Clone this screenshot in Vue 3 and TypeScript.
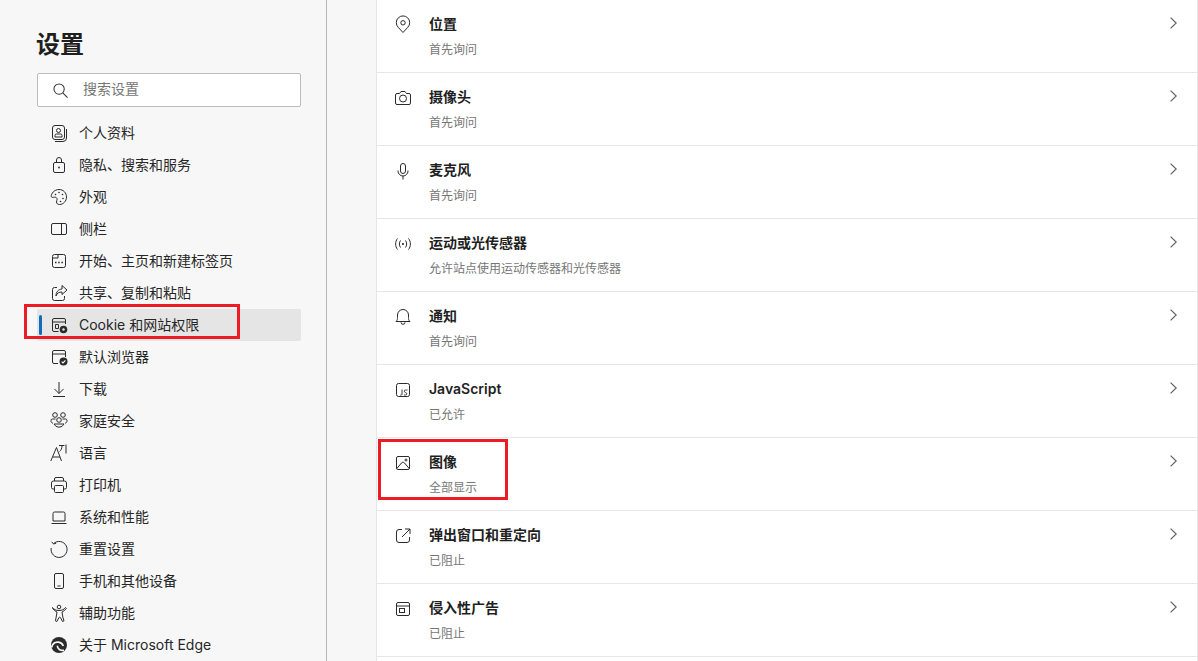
<script setup lang="ts">
interface NavItem {
  icon: string
  label: string
  active?: boolean
}

interface PermRow {
  icon: string
  title: string
  sub: string
  marked?: boolean
}

const navItems: NavItem[] = [
  { icon: 'profile', label: '个人资料' },
  { icon: 'lock', label: '隐私、搜索和服务' },
  { icon: 'palette', label: '外观' },
  { icon: 'sidebar', label: '侧栏' },
  { icon: 'start', label: '开始、主页和新建标签页' },
  { icon: 'share', label: '共享、复制和粘贴' },
  { icon: 'cookie', label: 'Cookie 和网站权限', active: true },
  { icon: 'browser', label: '默认浏览器' },
  { icon: 'download', label: '下载' },
  { icon: 'family', label: '家庭安全' },
  { icon: 'language', label: '语言' },
  { icon: 'printer', label: '打印机' },
  { icon: 'laptop', label: '系统和性能' },
  { icon: 'reset', label: '重置设置' },
  { icon: 'phone', label: '手机和其他设备' },
  { icon: 'access', label: '辅助功能' },
  { icon: 'edge', label: '关于 Microsoft Edge' },
]

const rows: PermRow[] = [
  { icon: 'pin', title: '位置', sub: '首先询问' },
  { icon: 'camera', title: '摄像头', sub: '首先询问' },
  { icon: 'mic', title: '麦克风', sub: '首先询问' },
  { icon: 'motion', title: '运动或光传感器', sub: '允许站点使用运动传感器和光传感器' },
  { icon: 'bell', title: '通知', sub: '首先询问' },
  { icon: 'js', title: 'JavaScript', sub: '已允许' },
  { icon: 'image', title: '图像', sub: '全部显示', marked: true },
  { icon: 'popup', title: '弹出窗口和重定向', sub: '已阻止' },
  { icon: 'ads', title: '侵入性广告', sub: '已阻止' },
]
</script>

<template>
  <div class="page">
    <aside class="side">
      <h1 class="heading">设置</h1>
      <div class="search">
        <svg class="search-icon" viewBox="0 0 16 16">
          <circle cx="6.5" cy="6.5" r="5.5" />
          <path d="M10.5 10.5 15.500 15.500" />
        </svg>
        <span class="search-text">搜索设置</span>
      </div>
      <nav class="nav">
        <div v-for="item in navItems" :key="item.label" class="nav-item" :class="{ active: item.active }">
          <span v-if="item.active" class="marker"></span>
          <span v-if="item.active" class="red-nav"></span>
          <svg class="icon" viewBox="0 0 20 20">
            <template v-if="item.icon === 'profile'">
              <rect x="3.500" y="2.500" width="12" height="14" rx="2.500" />
              <circle cx="9.500" cy="7.500" r="2" />
              <path d="M6 14v-1.500a1.500 1.500 0 0 1 1.500-1.500h4a1.500 1.500 0 0 1 1.500 1.500V14z" />
              <path d="M6 18.500h8a3.500 3.500 0 0 0 3.500-3.500V6" />
            </template>
            <template v-else-if="item.icon === 'lock'">
              <rect x="4.500" y="7.500" width="11" height="10" rx="1.500" />
              <path d="M7.500 7.500V5a2.500 2.500 0 0 1 5 0v2.500" />
              <circle cx="10" cy="12.500" r=".9" class="fill" />
            </template>
            <template v-else-if="item.icon === 'palette'">
              <path d="M10 2.500c4.400 0 7.500 3.400 7.500 7.500s-3.100 7.500-7 7.500c-2 0-3-1-3-2.500 0-1.300.6-1.800.6-2.800 0-1.500-1.300-2.200-2.800-2-1.300.2-2.800.4-3-.5C1.900 6.500 5.400 2.500 10 2.500z" />
              <circle cx="6.500" cy="7.500" r=".8" class="fill" />
              <circle cx="10" cy="5.500" r=".8" class="fill" />
              <circle cx="13.500" cy="7.500" r=".8" class="fill" />
              <circle cx="14" cy="11.500" r=".8" class="fill" />
              <circle cx="11.500" cy="14.500" r=".8" class="fill" />
            </template>
            <template v-else-if="item.icon === 'sidebar'">
              <rect x="2.500" y="4.500" width="15" height="11" rx="1.500" />
              <path d="M12.500 4.500v11" />
            </template>
            <template v-else-if="item.icon === 'start'">
              <rect x="3.500" y="3.500" width="13" height="13" rx="2" />
              <path d="M3.500 7h5.500V3.500" />
              <path d="M6 11.500h1.500M9.200 11.500h1.500M12.400 11.500h1.500" class="bold" />
            </template>
            <template v-else-if="item.icon === 'share'">
              <path d="M8 4.500H5.500a2 2 0 0 0-2 2v9a2 2 0 0 0 2 2h8a2 2 0 0 0 2-2V13" />
              <path d="M13 2.500 18 7l-5 4.500V9c-3 0-5 1-6 4 0-4 2-6.500 6-7z" />
            </template>
            <template v-else-if="item.icon === 'cookie'">
              <path d="M9.500 16.500H5a1.500 1.500 0 0 1-1.500-1.500V5A1.500 1.500 0 0 1 5 3.500h10A1.500 1.500 0 0 1 16.500 5v4" />
              <path d="M3.500 7h13M6.500 9.500h3v4h-3z" />
              <circle cx="14.500" cy="14.500" r="3.800" class="fill" />
              <circle cx="14.500" cy="14.500" r="1.200" class="hole" />
            </template>
            <template v-else-if="item.icon === 'browser'">
              <path d="M9 16.500H5a1.500 1.500 0 0 1-1.500-1.500V5A1.500 1.500 0 0 1 5 3.500h10A1.500 1.500 0 0 1 16.500 5v5" />
              <path d="M3.500 7h13" />
              <circle cx="14.500" cy="14.500" r="4" class="fill" />
              <path d="m12.700 14.600 1.300 1.300 2.400-2.600" class="check" />
            </template>
            <template v-else-if="item.icon === 'download'">
              <path d="M10 3v11.500M5.500 10l4.500 4.500 4.500-4.500M4 17.500h12" />
            </template>
            <template v-else-if="item.icon === 'family'">
              <circle cx="6" cy="4" r="2.300" />
              <circle cx="14" cy="4" r="2.300" />
              <circle cx="10" cy="9" r="2.300" />
              <path d="M6.500 8H3.500a1.500 1.500 0 0 0-1.500 1.500V10c0 1 .6 1.800 2 2.300M13.500 8h3a1.500 1.500 0 0 1 1.500 1.500v.5c0 1-.6 1.800-2 2.300" />
              <path d="M5 13h10a5.500 5.500 0 0 1-10 0z" />
            </template>
            <template v-else-if="item.icon === 'language'">
              <path d="M1.800 18 7.500 4.500 12.500 18M4 14h7" />
              <path d="M10 2.500h5.500M17 1.500v9M13 2.500c0 3-1 5-2.500 6" />
            </template>
            <template v-else-if="item.icon === 'printer'">
              <path d="M5.500 6V4a1.500 1.500 0 0 1 1.500-1.500h6A1.500 1.500 0 0 1 14.500 4v2" />
              <path d="M5.500 14H4a1.500 1.500 0 0 1-1.500-1.500V8a2 2 0 0 1 2-2h11a2 2 0 0 1 2 2v4.500A1.500 1.500 0 0 1 16 14h-1.500" />
              <rect x="5.500" y="10.500" width="9" height="7" rx="1" />
            </template>
            <template v-else-if="item.icon === 'laptop'">
              <path d="M4 14V6.500A1.500 1.500 0 0 1 5.500 5h9A1.500 1.500 0 0 1 16 6.500V14M2.500 16.500h15M4 14h12" />
            </template>
            <template v-else-if="item.icon === 'reset'">
              <path d="M4.500 4.700A8 8 0 1 1 2.200 9" />
              <path d="M2.700 2.800 4.600 5l2.600-.8" />
            </template>
            <template v-else-if="item.icon === 'phone'">
              <rect x="5.500" y="2.500" width="9" height="15" rx="1.500" />
              <path d="M8.500 15h3" />
            </template>
            <template v-else-if="item.icon === 'access'">
              <circle cx="10" cy="4" r="1.800" />
              <path d="M3.500 4.500c1.500 2 3.500 3 6.500 3s5-1 6.500-3l.8 1c-1 1.500-2.500 2.800-4.300 3.500l.8 5 1.200 3.800-1.500.7-2-3.800c-.4-.8-1.200-.8-1.600 0l-2 3.800-1.500-.7L7.200 14l.8-5C6.200 8.300 4.700 7 3.700 5.500z" />
            </template>
            <template v-else-if="item.icon === 'edge'">
              <circle cx="10" cy="10" r="8" class="fill" />
              <path d="M2.500 12.500C3.500 8.500 6.500 6.800 9.500 7.200c2.300.3 3.900 1.600 4.800 3.800" class="cutline" />
              <path d="M8.300 10.800c.2 3 3 5.200 6.700 4.500" class="cutline" />
            </template>
          </svg>
          <span class="nav-label">{{ item.label }}</span>
        </div>
      </nav>
    </aside>

    <main class="content">
      <section class="card">
        <div v-for="row in rows" :key="row.title" class="row">
          <span v-if="row.marked" class="red-row"></span>
          <svg class="icon row-icon" viewBox="0 0 20 20">
            <template v-if="row.icon === 'pin'">
              <path d="M10 17.500 5.200 12.300a6.700 6.700 0 1 1 9.600 0z" />
              <circle cx="10" cy="7.800" r="2.200" />
            </template>
            <template v-else-if="row.icon === 'camera'">
              <path d="M4 5.500h2.500L8 3.500h4l1.500 2H16A1.500 1.500 0 0 1 17.500 7v8a1.500 1.500 0 0 1-1.500 1.500H4A1.500 1.500 0 0 1 2.500 15V7A1.500 1.500 0 0 1 4 5.500z" />
              <circle cx="10" cy="10.500" r="3.500" />
            </template>
            <template v-else-if="row.icon === 'mic'">
              <rect x="7.500" y="2.500" width="5" height="10" rx="2.500" />
              <path d="M5 9.500v.5a5 5 0 0 0 10 0v-.5M10 15v3.500" />
            </template>
            <template v-else-if="row.icon === 'motion'">
              <circle cx="10" cy="10" r="1.100" class="fill" />
              <path d="M7.500 6.500c-1.500 2-1.500 5 0 7M12.500 6.500c1.500 2 1.500 5 0 7M4.500 4.500c-2.500 3-2.500 8 0 11M15.500 4.500c2.500 3 2.500 8 0 11" />
            </template>
            <template v-else-if="row.icon === 'bell'">
              <path d="M3 14.500c1.300-1 1.500-2.500 1.500-4V8a5.500 5.500 0 0 1 11 0v2.500c0 1.500.2 3 1.500 4z" />
              <path d="M8 14.500a2 2 0 0 0 4 0" transform="translate(0 .8)" />
            </template>
            <template v-else-if="row.icon === 'js'">
              <rect x="3.500" y="3.500" width="13" height="13" rx="2" />
              <path d="M9 9.500v4.500c0 1-.6 1.300-1.800 1M14.500 10h-2c-.8 0-1.200.5-1.200 1.200s.4 1.100 1.200 1.300c.9.200 1.300.6 1.300 1.300s-.5 1.200-1.300 1.200h-1.500" class="thin" />
            </template>
            <template v-else-if="row.icon === 'image'">
              <rect x="3.500" y="3.500" width="13" height="13" rx="1.500" />
              <path d="m3.800 15.500 4.700-5.500c.9-1 2-1 3 0l4.700 5.500" />
              <circle cx="13" cy="7" r="1" />
            </template>
            <template v-else-if="row.icon === 'popup'">
              <path d="M9 3.500H6A2.500 2.500 0 0 0 3.500 6v8A2.500 2.500 0 0 0 6 16.500h8a2.500 2.500 0 0 0 2.500-2.500v-3" />
              <path d="M9 11 17 3M12 3h5v5" />
            </template>
            <template v-else-if="row.icon === 'ads'">
              <rect x="3.500" y="3.500" width="13" height="13" rx="1.500" />
              <path d="M3.500 7h13" />
              <rect x="6.500" y="9.500" width="5" height="4" />
            </template>
          </svg>
          <div class="row-text">
            <div class="row-title">{{ row.title }}</div>
            <div class="row-sub">{{ row.sub }}</div>
          </div>
          <svg class="chevron" viewBox="0 0 7 12">
            <path d="M.6.6 6.200 6 .6 11.400" />
          </svg>
        </div>
      </section>
    </main>
  </div>
</template>

<style>
html,
body {
  margin: 0;
  background: #f7f7f7;
}
</style>

<style scoped>
.page {
  display: flex;
  width: 1198px;
  height: 661px;
  overflow: hidden;
  background: #f7f7f7;
  color: #1f1f1f;
  font-family: Inter, "Noto Sans CJK SC", sans-serif;
}

.side {
  box-sizing: border-box;
  flex: none;
  width: 327px;
  padding: 27px 25px 0 37px;
  border-right: 1px solid #b5b5b5;
}

.heading {
  margin: 0 0 0 -1px;
  font-size: 24px;
  line-height: 36px;
  font-weight: 700;
}

.search {
  box-sizing: border-box;
  display: flex;
  align-items: center;
  height: 34px;
  margin-top: 10px;
  padding-left: 15px;
  background: #fff;
  border: 1px solid #bcbcbc;
  border-radius: 2px;
  font-size: 14px;
  color: #767676;
}

.search-text {
  padding-bottom: 4px;
}

.search-icon {
  width: 15px;
  height: 15px;
  margin-right: 15px;
  fill: none;
  stroke: #333;
  stroke-width: 1.1;
}

.nav {
  margin-top: 10px;
}

.nav-item {
  position: relative;
  display: flex;
  align-items: center;
  height: 32px;
  padding-left: 12px;
  border-radius: 2px;
  font-size: 14px;
  color: #262626;
}

.nav-label {
  padding-bottom: 2px;
}

.nav-item.active {
  background: #e5e5e5;
}

.marker {
  position: absolute;
  left: 2px;
  top: 6px;
  width: 3px;
  height: 20px;
  background: #0f6cbd;
  border-radius: 2px;
}

.red-nav {
  position: absolute;
  left: -13px;
  top: -5px;
  width: 216px;
  height: 35px;
  box-sizing: border-box;
  border: 3px solid #ed1c24;
}

.icon {
  flex: none;
  width: 20px;
  height: 20px;
  margin-right: 10px;
  fill: none;
  stroke: #2b2b2b;
  stroke-width: 1;
}

.icon .fill {
  fill: #2b2b2b;
  stroke: none;
}

.icon .hole {
  fill: #e5e5e5;
  stroke: none;
}

.icon .cutline {
  stroke: #f7f7f7;
  stroke-width: 1.7;
}

.icon .check {
  stroke: #fff;
  stroke-width: 1.1;
}

.icon .bold {
  stroke-width: 1.6;
}

.icon .thin {
  stroke-width: .9;
}

.content {
  flex: 1;
  min-width: 0;
  padding-left: 49px;
}

.card {
  box-sizing: border-box;
  height: 680px;
  background: #fff;
  border-left: 1px solid #e6e6e6;
  border-right: 1px solid #e6e6e6;
}

.row {
  position: relative;
  box-sizing: border-box;
  display: flex;
  align-items: flex-start;
  height: 73px;
  padding: 15px 0 0 16px;
  border-bottom: 1px solid #e6e6e6;
}

.row-icon {
  margin: 0 16px 0 0;
}

.row-text {
  flex: 1;
  margin-top: -1px;
}

.row-title {
  font-size: 14px;
  line-height: 20px;
  font-weight: 600;
  color: #1f1f1f;
}

.row-sub {
  margin-top: 7px;
  font-size: 12px;
  line-height: 18px;
  color: #767676;
}

.chevron {
  flex: none;
  width: 7px;
  height: 12px;
  margin: 2px 20px 0 0;
  fill: none;
  stroke: #5f5f5f;
  stroke-width: 1.2;
}

.red-row {
  position: absolute;
  left: 1px;
  top: 1px;
  width: 130px;
  height: 61px;
  box-sizing: border-box;
  border: 3px solid #ed1c24;
}
</style>
